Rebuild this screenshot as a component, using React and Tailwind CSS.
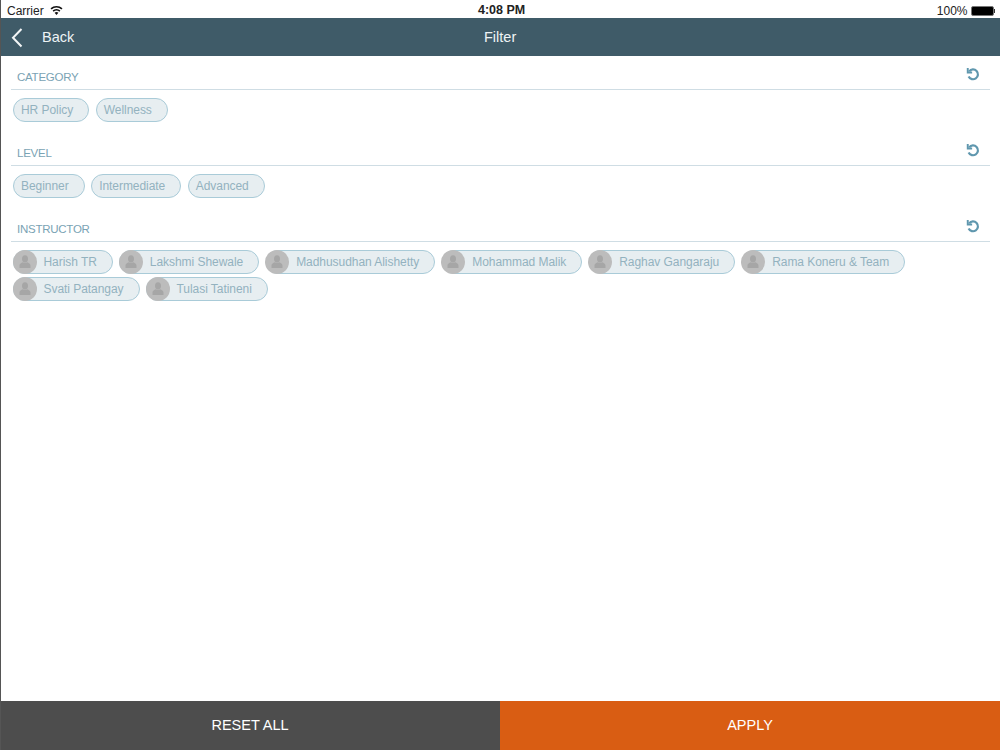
const FONT = "font-['Liberation_Sans',Arial,sans-serif]";

function Reset() {
  return (
    <svg width="14" height="14" viewBox="0 0 16 16" fill="none" stroke="#5f97ae" strokeWidth="2.5" className="mb-[8px] mr-[2px]">
      <path d="M3.6 5 A5.6 5.6 0 1 1 3 10.8" />
      <path d="M2 1.2 V6.2 H7" strokeWidth="2.2" />
    </svg>
  );
}

function Chip({ children }) {
  return (
    <div className="h-6 flex items-center rounded-full border-[1.5px] border-[#a9cbd8] bg-[#e7eef1] pl-[7px] pr-[15px] text-[12px] tracking-[-0.05px] text-[#93b2bf] whitespace-nowrap">
      <span>{children}</span>
    </div>
  );
}

function Person({ name }) {
  return (
    <div className="h-6 flex items-center rounded-full border-[1.5px] border-[#a9cbd8] bg-[#e7eef1] text-[12px] tracking-[-0.05px] text-[#93b2bf] whitespace-nowrap pr-[15px]">
      <div className="w-6 h-6 -ml-[1.5px] rounded-full bg-[#bcbcbc] flex items-center justify-center shrink-0">
        <svg width="14" height="14" viewBox="0 0 14 14" fill="#a6a6a6">
          <ellipse cx="7" cy="3.8" rx="3" ry="3.6" />
          <path d="M1.5 13 V10.4 C1.5 8.8 3.4 7.8 4.8 7.2 C6 8 8 8 9.2 7.2 C10.6 7.8 12.5 8.8 12.5 10.4 V13 Z" />
        </svg>
      </div>
      <span className="ml-[7px]">{name}</span>
    </div>
  );
}

function Section({ title, children }) {
  return (
    <section className="px-[10px]">
      <div className="h-[34px] flex items-end justify-between border-b border-[#cfdde4] pl-[6px] pr-[8px]">
        <span className="text-[11.5px] tracking-[-0.25px] leading-[15px] text-[#7aa3b4] mb-[4px]">{title}</span>
        <Reset />
      </div>
      {children}
    </section>
  );
}

export default function App() {
  const names = ["Harish TR", "Lakshmi Shewale", "Madhusudhan Alishetty", "Mohammad Malik", "Raghav Gangaraju", "Rama Koneru & Team", "Svati Patangay", "Tulasi Tatineni"];
  return (
    <div className={`w-[1000px] h-[750px] flex flex-col bg-white border-l border-[#555] overflow-hidden ${FONT}`}>
      <div className="h-[18px] shrink-0 relative flex items-center justify-between pl-[6px] pr-[5px] pt-[3px] text-[12px] text-[#222]">
        <div className="flex items-center gap-[6px]">
          <span>Carrier</span>
          <svg width="13" height="10" viewBox="0 0 13 10" fill="#111" className="-mt-[2px]">
            <path d="M6.5 10 L4.6 7.8 A3 3 0 0 1 8.4 7.8 Z" />
            <path d="M3.6 6.7 L2.6 5.6 A5.8 5.8 0 0 1 10.4 5.6 L9.4 6.7 A4.4 4.4 0 0 0 3.6 6.7 Z" />
            <path d="M1.6 4.5 L0.5 3.3 A8.8 8.8 0 0 1 12.5 3.3 L11.4 4.5 A7.2 7.2 0 0 0 1.6 4.5 Z" />
          </svg>
        </div>
        <span className="absolute left-[477px] font-bold text-[12.5px]">4:08 PM</span>
        <div className="flex items-center gap-[3px]">
          <span>100%</span>
          <div className="flex items-center">
            <div className="w-[23px] h-[10px] rounded-[2px] bg-black border border-[#777]" />
            <div className="w-[1.5px] h-[4px] bg-[#333]" />
          </div>
        </div>
      </div>

      <header className="h-[38px] shrink-0 bg-[#3f5b68] text-[#eef3f5] text-[14.5px] flex items-center relative">
        <svg width="12" height="20" viewBox="0 0 12 20" fill="none" stroke="#f2f5f6" strokeWidth="2" className="ml-[10px] mt-[1px]">
          <path d="M10.5 1 L2 9.7 L10.5 18.5" />
        </svg>
        <span className="ml-[19px] mt-[2px]">Back</span>
        <span className="absolute left-[483px] mt-[2px]">Filter</span>
      </header>

      <main className="flex-1">
        <Section title="CATEGORY">
          <div className="flex flex-wrap gap-[6.5px] pl-[2px] pt-2 h-[42px] items-start">
            <Chip>HR Policy</Chip>
            <Chip>Wellness</Chip>
          </div>
        </Section>
        <Section title="LEVEL">
          <div className="flex flex-wrap gap-[6.5px] pl-[2px] pt-2 h-[42px] items-start">
            <Chip>Beginner</Chip>
            <Chip>Intermediate</Chip>
            <Chip>Advanced</Chip>
          </div>
        </Section>
        <Section title="INSTRUCTOR">
          <div className="flex flex-wrap gap-x-[6.5px] gap-y-[3px] pl-[2px] pt-2">
            {names.map((n) => <Person key={n} name={n} />)}
          </div>
        </Section>
      </main>

      <footer className="h-[49px] shrink-0 -ml-px flex text-white text-[14.5px]">
        <button className="w-[500px] bg-[#4d4d4d]">RESET ALL</button>
        <button className="w-[500px] bg-[#d95d13]">APPLY</button>
      </footer>
    </div>
  );
}
